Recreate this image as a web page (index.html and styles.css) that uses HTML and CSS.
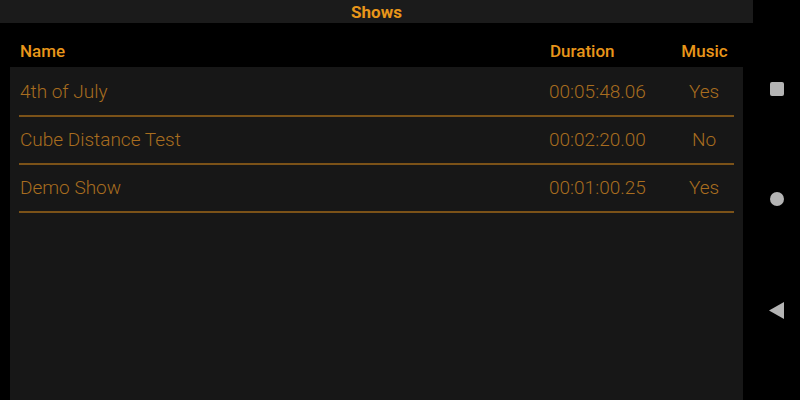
FILE: index.html
```html
<!DOCTYPE html>
<html>
<head>
<meta charset="utf-8">
<link rel="stylesheet" href="styles.css">
</head>
<body>
<div class="screen">
  <div class="main">
    <div class="titlebar">Shows</div>
    <div class="head cols">
      <div>Name</div>
      <div>Duration</div>
      <div class="c">Music</div>
    </div>
    <div class="panel">
      <div class="row cols">
        <div>4th of July</div>
        <div>00:05:48.06</div>
        <div class="c">Yes</div>
      </div>
      <div class="row cols">
        <div>Cube Distance Test</div>
        <div>00:02:20.00</div>
        <div class="c">No</div>
      </div>
      <div class="row cols">
        <div>Demo Show</div>
        <div>00:01:00.25</div>
        <div class="c">Yes</div>
      </div>
    </div>
  </div>
  <div class="nav">
    <div class="sq"></div>
    <div class="dot"></div>
    <svg class="tri" width="15" height="17" viewBox="0 0 15 17"><polygon points="0,8.5 15,0 15,17" fill="#b4b4b4"/></svg>
  </div>
</div>
</body>
</html>
```
FILE: styles.css
```css
html, body {
  margin: 0;
  padding: 0;
  background: #000;
}
body {
  font-family: Roboto, "Noto Sans", sans-serif;
}
.screen {
  display: flex;
  width: 800px;
  height: 400px;
  overflow: hidden;
}
.main {
  width: 753px;
  display: flex;
  flex-direction: column;
}
.titlebar {
  height: 23px;
  background: #1b1b1b;
  color: #e8961a;
  font-weight: 700;
  font-size: 17px;
  line-height: 25px;
  text-align: center;
}
.cols {
  display: grid;
  grid-template-columns: 1fr 123px 62px;
  align-items: center;
}
.c {
  text-align: center;
}
.head {
  height: 44px;
  box-sizing: border-box;
  padding: 18px 19px 5px 20px;
  color: #e8961a;
  font-weight: 500;
  font-size: 17px;
  line-height: 21px;
}
.head > div:nth-child(2) {
  margin-left: 1px;
}
.head > div:nth-child(3) {
  margin-left: 3px;
}
.panel {
  flex: 1;
  margin: 0 10px;
  background: #171717;
  padding: 2px 9px 0;
}
.row {
  height: 48px;
  box-sizing: border-box;
  border-bottom: 2px solid #7b5218;
  color: #a86d1f;
  font-size: 19px;
  font-weight: 300;
  padding-left: 1px;
  padding-bottom: 2px;
}
.row > div:nth-child(3) {
  margin-left: 2px;
}
.nav {
  width: 47px;
  display: flex;
  flex-direction: column;
  align-items: center;
  justify-content: center;
  gap: 96px;
}
.sq {
  width: 14px;
  height: 14px;
  background: #b4b4b4;
  border-radius: 2px;
}
.dot {
  width: 14px;
  height: 14px;
  background: #b4b4b4;
  border-radius: 50%;
}
.tri {
  display: block;
}
```
